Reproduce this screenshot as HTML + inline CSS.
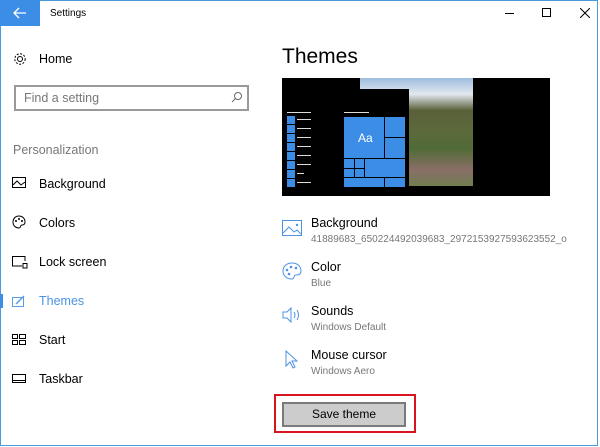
<!DOCTYPE html>
<html><head><meta charset="utf-8"><style>
*{margin:0;padding:0;box-sizing:border-box}
body{width:600px;height:447px;background:#fff;font-family:"Liberation Sans",sans-serif;position:relative;overflow:hidden;color:#000}
.a{position:absolute}
.nav{font-size:12.5px;left:39px}
.ic{position:absolute;left:12px}
.t{font-size:12.5px;left:311px}
.s{font-size:10px;color:#777;left:311px}
</style></head><body>
<div class="a" style="left:0;top:0;width:598px;height:446px;border:1px solid #4a9ae0;border-top-width:1px"></div>
<div class="a" style="left:0;top:0;width:40px;height:26px;background:#3b8de6"></div>
<svg class="a" style="left:13px;top:7px" width="14" height="12"><path d="M1 6H13M6 1L1 6L6 11" stroke="#fff" stroke-width="1.3" fill="none"/></svg>
<div class="a" style="left:50px;top:8px;font-size:10px">Settings</div>
<div class="a" style="left:505px;top:13px;width:9px;height:1px;background:#000"></div>
<div class="a" style="left:542px;top:8px;width:9px;height:9px;border:1px solid #000"></div>
<svg class="a" style="left:580px;top:8px" width="10" height="10"><path d="M0 0L10 10M10 0L0 10" stroke="#000" stroke-width="1"/></svg>

<svg class="a" style="left:13px;top:52px" width="14" height="14"><circle cx="7" cy="7" r="2.5" fill="none" stroke="#000"/><circle cx="7" cy="7" r="5.2" fill="none" stroke="#000" stroke-dasharray="2 1.5"/></svg>
<div class="a nav" style="top:52px">Home</div>
<div class="a" style="left:14px;top:85px;width:235px;height:26px;border:2px solid #999"></div>
<div class="a" style="left:24px;top:91px;font-size:12.5px;color:#777">Find a setting</div>
<svg class="a" style="left:231px;top:91px" width="12" height="12"><circle cx="7" cy="5" r="3.5" fill="none" stroke="#666"/><path d="M4.5 7.5L1 11" stroke="#666"/></svg>
<div class="a" style="left:13px;top:143px;font-size:12.5px;color:#777">Personalization</div>

<svg class="ic" style="top:177px" width="14" height="12"><rect x=".5" y=".5" width="13" height="10" fill="none" stroke="#000"/><path d="M1 8L5 4L9 8L13 5" stroke="#000" fill="none"/></svg>
<div class="a nav" style="top:177px">Background</div>
<svg class="ic" style="top:215px" width="14" height="14"><path d="M7 1C3 1 1 4 1 7C1 11 4 13 7 13C9 13 8 10 10 10C12 10 13 9 13 7C13 3 10 1 7 1Z" fill="none" stroke="#000"/><circle cx="4" cy="6" r="1" fill="#000"/><circle cx="7" cy="4" r="1" fill="#000"/><circle cx="10" cy="6" r="1" fill="#000"/></svg>
<div class="a nav" style="top:216px">Colors</div>
<svg class="ic" style="top:256px" width="16" height="13"><path d="M10 10H.5V.5H13V5" fill="none" stroke="#000"/><rect x="11" y="7.5" width="4" height="4.5" fill="none" stroke="#000"/></svg>
<div class="a nav" style="top:255px">Lock screen</div>
<div class="a" style="left:0;top:294px;width:3px;height:14px;background:#3b8de6"></div>
<svg class="ic" style="top:294px" width="14" height="14"><rect x=".5" y="3.5" width="11" height="9" fill="none" stroke="#5b9ee8"/><path d="M4 10L12 2" stroke="#5b9ee8" stroke-width="1.5"/></svg>
<div class="a nav" style="top:294px;color:#4b93e4">Themes</div>
<svg class="ic" style="top:334px" width="14" height="11"><rect x=".5" y=".5" width="5" height="4" fill="none" stroke="#000"/><rect x="7.5" y=".5" width="6" height="4" fill="none" stroke="#000"/><rect x=".5" y="6.5" width="5" height="4" fill="none" stroke="#000"/><rect x="7.5" y="6.5" width="6" height="4" fill="none" stroke="#000"/></svg>
<div class="a nav" style="top:333px">Start</div>
<svg class="ic" style="top:374px" width="14" height="10"><rect x=".5" y=".5" width="13" height="8" fill="none" stroke="#000"/><path d="M1 6.5H13" stroke="#000"/></svg>
<div class="a nav" style="top:372px">Taskbar</div>

<div class="a" style="left:282px;top:45px;font-size:21px">Themes</div>
<div class="a" style="left:282px;top:78px;width:268px;height:118px;background:#000"></div>
<div class="a" style="left:360px;top:78px;width:113px;height:108px;background:linear-gradient(180deg,#9fbde0 0%,#e2e8ee 15%,#59603a 30%,#5d6a3b 50%,#4f6b35 65%,#8a6e68 85%,#6f7f50 100%)"></div>
<div class="a" style="left:360px;top:89px;width:49px;height:97px;background:#000"></div>
<div class="a" style="left:287px;top:112px;width:24px;height:1px;background:#ddd"></div>
<div class="a" style="left:344px;top:112px;width:25px;height:1px;background:#ddd"></div>
<svg class="a" style="left:287px;top:116px" width="25" height="72">
<g fill="#3b8de6"><rect x="0" y="0" width="8" height="8"/><rect x="0" y="9" width="8" height="8"/><rect x="0" y="18" width="8" height="8"/><rect x="0" y="27" width="8" height="8"/><rect x="0" y="36" width="8" height="8"/><rect x="0" y="45" width="8" height="8"/><rect x="0" y="54" width="8" height="8"/><rect x="0" y="63" width="8" height="8"/></g>
<g stroke="#ddd"><path d="M10 3.5H24M10 12.5H24M10 21.5H24M10 30.5H24M10 39.5H24M10 48.5H24M10 57.5H17M10 66.5H24"/></g></svg>
<svg class="a" style="left:344px;top:117px" width="61" height="70">
<rect width="61" height="70" fill="#3b8de6"/>
<g stroke="#000" stroke-width="1"><path d="M40.5 0V41M40.5 20.5H61M0 41.5H61M0 60.5H61M10.5 41V60M20.5 41V60M0 51.5H20M40.5 60V70"/></g>
<text x="14" y="25" fill="#fff" font-size="12" font-family="Liberation Sans">Aa</text></svg>

<svg class="a" style="left:282px;top:220px" width="20" height="17"><rect x=".5" y=".5" width="19" height="15" fill="none" stroke="#4b93e4"/><path d="M1 13L7 7L12 12L15 10L19 14" stroke="#4b93e4" fill="none"/><circle cx="15" cy="5" r="1.2" fill="#4b93e4"/></svg>
<div class="a t" style="top:216px">Background</div>
<div class="a s" style="top:234px">41889683_650224492039683_2972153927593623552_o</div>
<svg class="a" style="left:282px;top:262px" width="20" height="18"><path d="M10 1C4 1 1 5 1 9C1 14 5 17 10 17C13 17 11 13 14 13C17 13 19 12 19 9C19 4 15 1 10 1Z" fill="none" stroke="#4b93e4"/><circle cx="5" cy="8" r="1.3" fill="#4b93e4"/><circle cx="9" cy="5" r="1.3" fill="#4b93e4"/><circle cx="14" cy="6" r="1.3" fill="#4b93e4"/><circle cx="7" cy="12" r="1.3" fill="#4b93e4"/></svg>
<div class="a t" style="top:260px">Color</div>
<div class="a s" style="top:278px">Blue</div>
<svg class="a" style="left:282px;top:306px" width="20" height="18"><path d="M1 6H5L9 2V16L5 12H1Z" fill="none" stroke="#4b93e4"/><path d="M12 6Q14 9 12 12M15 4Q18 9 15 14" fill="none" stroke="#4b93e4"/></svg>
<div class="a t" style="top:304px">Sounds</div>
<div class="a s" style="top:322px">Windows Default</div>
<svg class="a" style="left:285px;top:350px" width="14" height="20"><path d="M1 1V16L5 12L8 18L10 17L7 11H12Z" fill="none" stroke="#4b93e4"/></svg>
<div class="a t" style="top:348px">Mouse cursor</div>
<div class="a s" style="top:366px">Windows Aero</div>

<div class="a" style="left:274px;top:394px;width:142px;height:39px;border:2px solid #d8141e"></div>
<div class="a" style="left:282px;top:402px;width:124px;height:25px;background:#ccc;border:2px solid #7a7a7a;font-size:12px;text-align:center;line-height:21px">Save theme</div>
</body></html>
